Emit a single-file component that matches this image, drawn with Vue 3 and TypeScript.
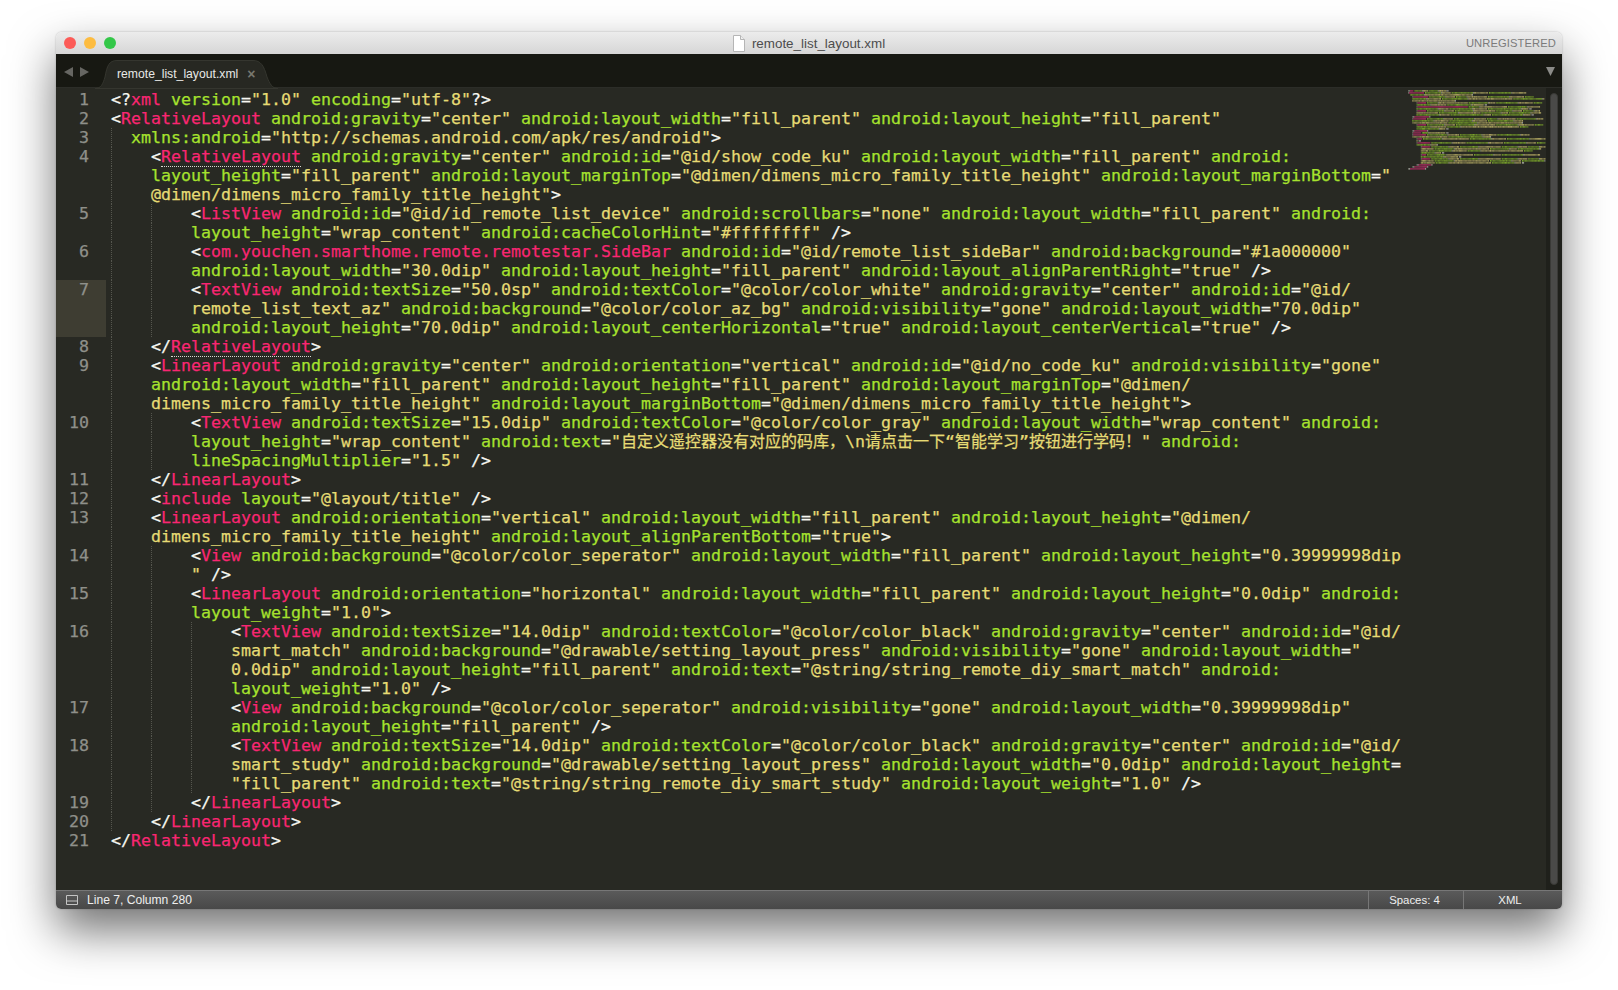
<script setup lang="ts">
interface Tok { text: string; cls: string; match: boolean }
interface SrcRow { n?: number; indent: number; text: string; match?: boolean; active?: boolean }

const src: SrcRow[] = [
  { n: 1, indent: 0, text: '<?xml version="1.0" encoding="utf-8"?>' },
  { n: 2, indent: 0, text: '<RelativeLayout android:gravity="center" android:layout_width="fill_parent" android:layout_height="fill_parent"' },
  { n: 3, indent: 2, text: 'xmlns:android="http://schemas.android.com/apk/res/android">' },
  { n: 4, indent: 4, match: true, text: '<RelativeLayout android:gravity="center" android:id="@id/show_code_ku" android:layout_width="fill_parent" android:' },
  { indent: 4, text: 'layout_height="fill_parent" android:layout_marginTop="@dimen/dimens_micro_family_title_height" android:layout_marginBottom="' },
  { indent: 4, text: '@dimen/dimens_micro_family_title_height">' },
  { n: 5, indent: 8, text: '<ListView android:id="@id/id_remote_list_device" android:scrollbars="none" android:layout_width="fill_parent" android:' },
  { indent: 8, text: 'layout_height="wrap_content" android:cacheColorHint="#ffffffff" />' },
  { n: 6, indent: 8, text: '<com.youchen.smarthome.remote.remotestar.SideBar android:id="@id/remote_list_sideBar" android:background="#1a000000"' },
  { indent: 8, text: 'android:layout_width="30.0dip" android:layout_height="fill_parent" android:layout_alignParentRight="true" />' },
  { n: 7, indent: 8, active: true, text: '<TextView android:textSize="50.0sp" android:textColor="@color/color_white" android:gravity="center" android:id="@id/' },
  { indent: 8, active: true, text: 'remote_list_text_az" android:background="@color/color_az_bg" android:visibility="gone" android:layout_width="70.0dip"' },
  { indent: 8, active: true, text: 'android:layout_height="70.0dip" android:layout_centerHorizontal="true" android:layout_centerVertical="true" />' },
  { n: 8, indent: 4, match: true, text: '</RelativeLayout>' },
  { n: 9, indent: 4, text: '<LinearLayout android:gravity="center" android:orientation="vertical" android:id="@id/no_code_ku" android:visibility="gone"' },
  { indent: 4, text: 'android:layout_width="fill_parent" android:layout_height="fill_parent" android:layout_marginTop="@dimen/' },
  { indent: 4, text: 'dimens_micro_family_title_height" android:layout_marginBottom="@dimen/dimens_micro_family_title_height">' },
  { n: 10, indent: 8, text: '<TextView android:textSize="15.0dip" android:textColor="@color/color_gray" android:layout_width="wrap_content" android:' },
  { indent: 8, text: 'layout_height="wrap_content" android:text="自定义遥控器没有对应的码库，\\n请点击一下“智能学习”按钮进行学码！" android:' },
  { indent: 8, text: 'lineSpacingMultiplier="1.5" />' },
  { n: 11, indent: 4, text: '</LinearLayout>' },
  { n: 12, indent: 4, text: '<include layout="@layout/title" />' },
  { n: 13, indent: 4, text: '<LinearLayout android:orientation="vertical" android:layout_width="fill_parent" android:layout_height="@dimen/' },
  { indent: 4, text: 'dimens_micro_family_title_height" android:layout_alignParentBottom="true">' },
  { n: 14, indent: 8, text: '<View android:background="@color/color_seperator" android:layout_width="fill_parent" android:layout_height="0.39999998dip' },
  { indent: 8, text: '" />' },
  { n: 15, indent: 8, text: '<LinearLayout android:orientation="horizontal" android:layout_width="fill_parent" android:layout_height="0.0dip" android:' },
  { indent: 8, text: 'layout_weight="1.0">' },
  { n: 16, indent: 12, text: '<TextView android:textSize="14.0dip" android:textColor="@color/color_black" android:gravity="center" android:id="@id/' },
  { indent: 12, text: 'smart_match" android:background="@drawable/setting_layout_press" android:visibility="gone" android:layout_width="' },
  { indent: 12, text: '0.0dip" android:layout_height="fill_parent" android:text="@string/string_remote_diy_smart_match" android:' },
  { indent: 12, text: 'layout_weight="1.0" />' },
  { n: 17, indent: 12, text: '<View android:background="@color/color_seperator" android:visibility="gone" android:layout_width="0.39999998dip"' },
  { indent: 12, text: 'android:layout_height="fill_parent" />' },
  { n: 18, indent: 12, text: '<TextView android:textSize="14.0dip" android:textColor="@color/color_black" android:gravity="center" android:id="@id/' },
  { indent: 12, text: 'smart_study" android:background="@drawable/setting_layout_press" android:layout_width="0.0dip" android:layout_height=' },
  { indent: 12, text: '"fill_parent" android:text="@string/string_remote_diy_smart_study" android:layout_weight="1.0" />' },
  { n: 19, indent: 8, text: '</LinearLayout>' },
  { n: 20, indent: 4, text: '</LinearLayout>' },
  { n: 21, indent: 0, text: '</RelativeLayout>' },
]

const CJK = /([\u4e00-\u9fff，！]+)/

function tokenize(text: string, startInString: boolean, match: boolean): { toks: Tok[]; inStr: boolean } {
  const toks: Tok[] = []
  let inStr = startInString
  let inTag = false
  const push = (t: string, cls: string, m = false) => {
    const last = toks[toks.length - 1]
    if (last && last.cls === cls && last.match === m) last.text += t
    else toks.push({ text: t, cls, match: m })
  }
  for (let i = 0; i < text.length; i++) {
    const c = text[i]
    if (inStr) {
      push(c, 'str')
      if (c === '"') inStr = false
    } else if (c === '"') {
      push(c, 'str')
      inStr = true
    } else if (inTag) {
      if (c === ' ' || c === '>') {
        inTag = false
        push(c, 'pun')
      } else push(c, 'tag', match)
    } else if (c === '<') {
      push(c, 'pun')
      if (text[i + 1] === '/' || text[i + 1] === '?') {
        push(text[i + 1], 'pun')
        i++
      }
      inTag = true
    } else if (c === '=' || c === '>' || c === '/' || c === '?') {
      push(c, 'pun')
    } else {
      push(c, 'attr')
    }
  }
  const out: Tok[] = []
  for (const t of toks) {
    if (t.cls !== 'str') {
      out.push(t)
      continue
    }
    t.text.split(CJK).forEach((part, idx) => {
      if (part) out.push({ text: part, cls: idx % 2 ? 'str cjk' : 'str', match: false })
    })
  }
  return { toks: out, inStr }
}

let open = false
const rows = src.map((r) => {
  const res = tokenize(r.text, open, !!r.match)
  open = res.inStr
  const cells: string[] = []
  if (r.indent === 2) cells.push('half')
  else for (let i = 0; i < r.indent / 4; i++) cells.push('full')
  return { ...r, toks: res.toks, cells }
})

const miniColors: Record<string, string> = {
  tag: '#a02c5c',
  attr: '#78a02c',
  str: '#a39b5c',
  pun: '#96968e',
}
const CHAR = 1.065
const miniRects = rows.flatMap((r, y) => {
  const out: { x: number; y: number; w: number; fill: string; op: number }[] = []
  let col = r.indent
  for (const t of r.toks) {
    const key = t.cls.split(' ')[0]
    const wide = t.cls.includes('cjk') ? 1.6 : 1
    for (const ch of t.text) {
      if (ch !== ' ') {
        const code = ch.charCodeAt(0)
        out.push({
          x: col * CHAR,
          y: y * 2,
          w: CHAR * wide,
          fill: miniColors[key],
          op: key === 'tag' ? 0.9 : 0.6 + ((code * 7) % 5) * 0.1,
        })
      }
      col += wide
    }
  }
  return out
})
</script>

<template>
  <div class="page">
    <div class="window">
      <header class="titlebar">
        <div class="lights">
          <span class="light red"></span>
          <span class="light yellow"></span>
          <span class="light green"></span>
        </div>
        <div class="title">
          <svg class="doc" width="12" height="17" viewBox="0 0 12 17">
            <path d="M.5.5H7.5L11.5 4.5V16.5H.5Z" fill="#fff" stroke="#b5b5b5" />
            <path d="M7.5.5V4.5H11.5" fill="#eee" stroke="#b5b5b5" />
          </svg>
          <span>remote_list_layout.xml</span>
        </div>
        <div class="unreg">UNREGISTERED</div>
      </header>

      <nav class="tabbar">
        <div class="arrows">
          <svg width="9" height="10" viewBox="0 0 9 10"><path d="M9 0V10L0 5Z" fill="#666662" /></svg>
          <svg width="9" height="10" viewBox="0 0 9 10"><path d="M0 0V10L9 5Z" fill="#666662" /></svg>
        </div>
        <div class="tab">
          <svg class="tabshape" width="183" height="29" viewBox="0 0 183 29">
            <path d="M0 28.5C6 28.5 8 24 10 17C12 6 14 .5 22 .5H158C166 .5 169 6 172 17C175 24 177 28.5 183 28.5Z" fill="#272822" stroke="#35362f" />
          </svg>
          <span class="tabname">remote_list_layout.xml</span>
          <span class="tabclose">×</span>
        </div>
        <svg class="dropdown" width="9" height="9" viewBox="0 0 9 9"><path d="M0 0H9L4.500 9Z" fill="#8b8b88" /></svg>
      </nav>

      <main class="body">
        <div class="lines">
          <div v-for="(row, i) in rows" :key="i" class="row">
            <div class="num" :class="{ active: row.active }">{{ row.n }}</div>
            <div class="code">
              <span v-for="(c, k) in row.cells" :key="k" class="cell" :class="c"></span>
              <span class="text"><span
                v-for="(t, j) in row.toks"
                :key="j"
                :class="[t.cls, { match: t.match }]"
              >{{ t.text }}</span></span>
            </div>
          </div>
        </div>
        <div class="minimap">
          <svg width="138" height="84" viewBox="0 0 138 84">
            <rect
              v-for="(m, i) in miniRects"
              :key="i"
              :x="m.x"
              :y="m.y"
              :width="m.w"
              height="1.7"
              :fill="m.fill"
              :opacity="m.op"
            />
          </svg>
        </div>
        <div class="scroll"><div class="thumb"></div></div>
      </main>

      <footer class="status">
        <svg class="panel" width="12" height="10" viewBox="0 0 12 10">
          <path d="M.5.500H11.500V9.500H.5ZM.5 6H11.500" fill="none" stroke="#c4c4c4" />
        </svg>
        <span class="pos">Line 7, Column 280</span>
        <span class="scell spaces">Spaces: 4</span>
        <span class="scell syntax">XML</span>
      </footer>
    </div>
  </div>
</template>

<style scoped>
.page {
  width: 1618px;
  height: 990px;
  box-sizing: border-box;
  padding: 32px 56px 81px;
  background: #fff;
  overflow: hidden;
}
.window {
  height: 877px;
  display: flex;
  flex-direction: column;
  border-radius: 6px 6px 5px 5px;
  overflow: hidden;
  box-shadow: 0 22px 46px rgba(0, 0, 0, 0.55), 0 0 2px rgba(0, 0, 0, 0.25);
}
.titlebar {
  height: 22px;
  flex: none;
  display: grid;
  grid-template-columns: 1fr auto 1fr;
  align-items: center;
  background: linear-gradient(#ececec, #d6d6d6);
  font-family: "Liberation Sans", sans-serif;
}
.lights {
  display: flex;
  gap: 8px;
  padding-left: 8px;
}
.light {
  width: 12px;
  height: 12px;
  border-radius: 50%;
}
.red { background: #fc5b57; }
.yellow { background: #fdbc40; }
.green { background: #33c748; }
.title {
  display: flex;
  align-items: center;
  gap: 7px;
  font-size: 13.4px;
  color: #4d4d4d;
}
.doc { margin-top: 1px; }
.unreg {
  justify-self: end;
  padding-right: 6px;
  font-size: 11.2px;
  letter-spacing: 0.1px;
  color: #7b7b7b;
}
.tabbar {
  height: 34px;
  flex: none;
  box-sizing: border-box;
  display: flex;
  align-items: flex-end;
  background: #171812;
  border-bottom: 1px solid #2c2d28;
  font-family: "Liberation Sans", sans-serif;
}
.arrows {
  display: flex;
  gap: 7px;
  align-self: center;
  padding-left: 8px;
  width: 31px;
  margin-top: 2px;
}
.arrows svg { display: block; flex: none; }
.tab {
  position: relative;
  width: 183px;
  height: 28px;
  margin-bottom: -1px;
  display: flex;
  align-items: center;
  padding-left: 22px;
  box-sizing: border-box;
}
.tabshape {
  position: absolute;
  left: 0;
  top: 0;
}
.tabname {
  position: relative;
  font-size: 12.2px;
  color: #e8e8e6;
}
.tabclose {
  position: relative;
  margin-left: 9px;
  font-size: 14px;
  line-height: 14px;
  font-weight: 700;
  color: #77776f;
}
.dropdown {
  margin-left: auto;
  margin-right: 7px;
  align-self: center;
  margin-top: 2px;
}
.body {
  flex: 1;
  min-height: 0;
  display: flex;
  background: #282923;
  font-family: "DejaVu Sans Mono", "Noto Sans CJK SC", monospace;
  font-size: 16.62px;
  line-height: 19px;
}
.lines {
  flex: none;
  width: 1352px;
  padding-top: 2px;
}
.row {
  display: flex;
  height: 19px;
}
.num {
  flex: none;
  width: 50px;
  box-sizing: border-box;
  padding-right: 17px;
  text-align: right;
  color: #8f908a;
  -webkit-text-stroke: 0.25px currentColor;
}
.num.active { background: #3e3d32; }
.code {
  display: flex;
  padding-left: 5px;
  white-space: pre;
  -webkit-text-stroke: 0.25px currentColor;
}
.cell {
  flex: none;
  box-sizing: border-box;
  height: 19px;
  border-left: 1px dotted #55564e;
}
.cell.full { width: 40px; }
.cell.half { width: 20px; }
.pun { color: #f8f8f2; }
.tag { color: #f92672; }
.attr { color: #a6e22e; }
.str { color: #e6db74; }
.cjk { font-size: 16px; }
.match { border-bottom: 1px dotted #d8d8d2; }
.minimap {
  flex: none;
  width: 138px;
  padding-top: 2px;
  overflow: hidden;
}
.minimap svg { display: block; }
.scroll {
  flex: none;
  width: 16px;
  background: #1f201b;
  box-sizing: border-box;
  padding: 5px 4px 5px;
}
.thumb {
  height: 100%;
  width: 8px;
  border-radius: 4px;
  background: #4a4a48;
  border: 1px solid #3a3a37;
  box-sizing: border-box;
}
.status {
  height: 19px;
  flex: none;
  box-sizing: border-box;
  display: flex;
  align-items: center;
  background: linear-gradient(#5a5a5a, #484848);
  border-top: 1px solid #777;
  font-family: "Liberation Sans", sans-serif;
  font-size: 11.4px;
  color: #eee;
}
.panel { margin-left: 10px; flex: none; }
.pos { margin-left: 9px; margin-right: auto; font-size: 12.1px; }
.scell {
  height: 100%;
  display: flex;
  align-items: center;
  justify-content: center;
  box-sizing: border-box;
  border-left: 1px solid #777;
}
.spaces { width: 95px; padding-right: 3px; }
.syntax { width: 99px; padding-right: 6px; }
</style>

<style>
html, body { margin: 0; background: #fff; }
</style>
